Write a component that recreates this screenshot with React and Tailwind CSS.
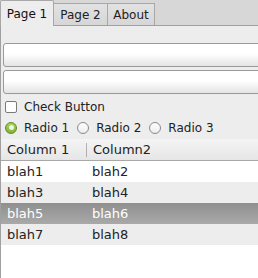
const font = { fontFamily: '"DejaVu Sans", sans-serif' };

function Entry() {
  return (
    <div className="h-[24px] w-[280px] rounded-[3px] border border-[#9a9a9a] bg-[linear-gradient(to_bottom,#ffffff_0%,#ffffff_45%,#e4e4e4_100%)]" />
  );
}

function Radio({ checked, label }) {
  return (
    <div className="flex items-center">
      {checked ? (
        <span className="flex h-[12px] w-[12px] items-center justify-center rounded-full border border-[#5f8a25] bg-[linear-gradient(to_bottom,#a9d063,#86b23e)]">
          <span className="h-[5px] w-[5px] rounded-full bg-[#eef6dc]" />
        </span>
      ) : (
        <span className="h-[12px] w-[12px] rounded-full border border-[#8a8a8a] bg-[linear-gradient(to_bottom,#ffffff,#ececec)]" />
      )}
      <span className="ml-[7px] mr-[8px] text-[12px] text-[#222]">{label}</span>
    </div>
  );
}

const rows = [
  ["blah1", "blah2", "bg-white text-[#222]"],
  ["blah3", "blah4", "bg-[#ededed] text-[#222]"],
  ["blah5", "blah6", "bg-[linear-gradient(to_bottom,#8f8f8f,#a9a9a9)] text-white"],
  ["blah7", "blah8", "bg-[#ededed] text-[#222]"],
];

export default function App() {
  return (
    <div style={font} className="flex h-[278px] w-[258px] flex-col overflow-hidden bg-white">
      {/* tabs */}
      <div className="flex h-[26px] shrink-0 items-end border-b border-[#a0a0a0] bg-[#d7d7d7]">
        <div className="relative z-10 -mb-px flex h-[26px] w-[54px] items-center justify-center rounded-t-[2px] border border-b-0 border-[#a8a8a8] bg-[#ededed] text-[12px] text-[#111]">
          Page 1
        </div>
        <div className="flex h-[22px] w-[54px] items-center justify-center border border-b-0 border-l-0 border-[#a8a8a8] bg-[linear-gradient(to_bottom,#e2e2e2,#d6d6d6)] text-[12px] text-[#222]">
          Page 2
        </div>
        <div className="flex h-[22px] w-[47px] items-center justify-center border border-b-0 border-l-0 border-[#a8a8a8] bg-[linear-gradient(to_bottom,#e2e2e2,#d6d6d6)] text-[12px] text-[#222]">
          About
        </div>
      </div>

      {/* page */}
      <div className="flex flex-1 flex-col border-l border-[#a0a0a0] bg-[#ededed]">
        <div className="flex flex-col gap-[3px] pl-[2px] pt-[17px]">
          <Entry />
          <Entry />
        </div>

        <div className="mt-[2px] flex h-[21px] items-center pl-[4px]">
          <span className="h-[12px] w-[12px] rounded-[2px] border border-[#7a7a7a] bg-white" />
          <span className="ml-[7px] text-[12px] text-[#222]">Check Button</span>
        </div>

        <div className="flex h-[21px] items-center pl-[4px]">
          <Radio checked label="Radio 1" />
          <Radio label="Radio 2" />
          <Radio label="Radio 3" />
        </div>

        {/* tree */}
        <div className="mt-[1px] flex flex-1 flex-col bg-white text-[13px]">
          <div className="flex h-[22px] items-center border-b border-[#a8a8a8] bg-[linear-gradient(to_bottom,#f4f4f4,#e6e6e6)] text-[#222]">
            <span className="w-[85px] pl-[6px]">Column 1</span>
            <span className="h-[14px] w-px bg-[#b0b0b0]" />
            <span className="pl-[6px]">Column2</span>
          </div>
          {rows.map(([a, b, cls]) => (
            <div key={a} className={`flex h-[21px] items-center ${cls}`}>
              <span className="w-[86px] pl-[6px]">{a}</span>
              <span className="pl-[5px]">{b}</span>
            </div>
          ))}
        </div>
      </div>
    </div>
  );
}
